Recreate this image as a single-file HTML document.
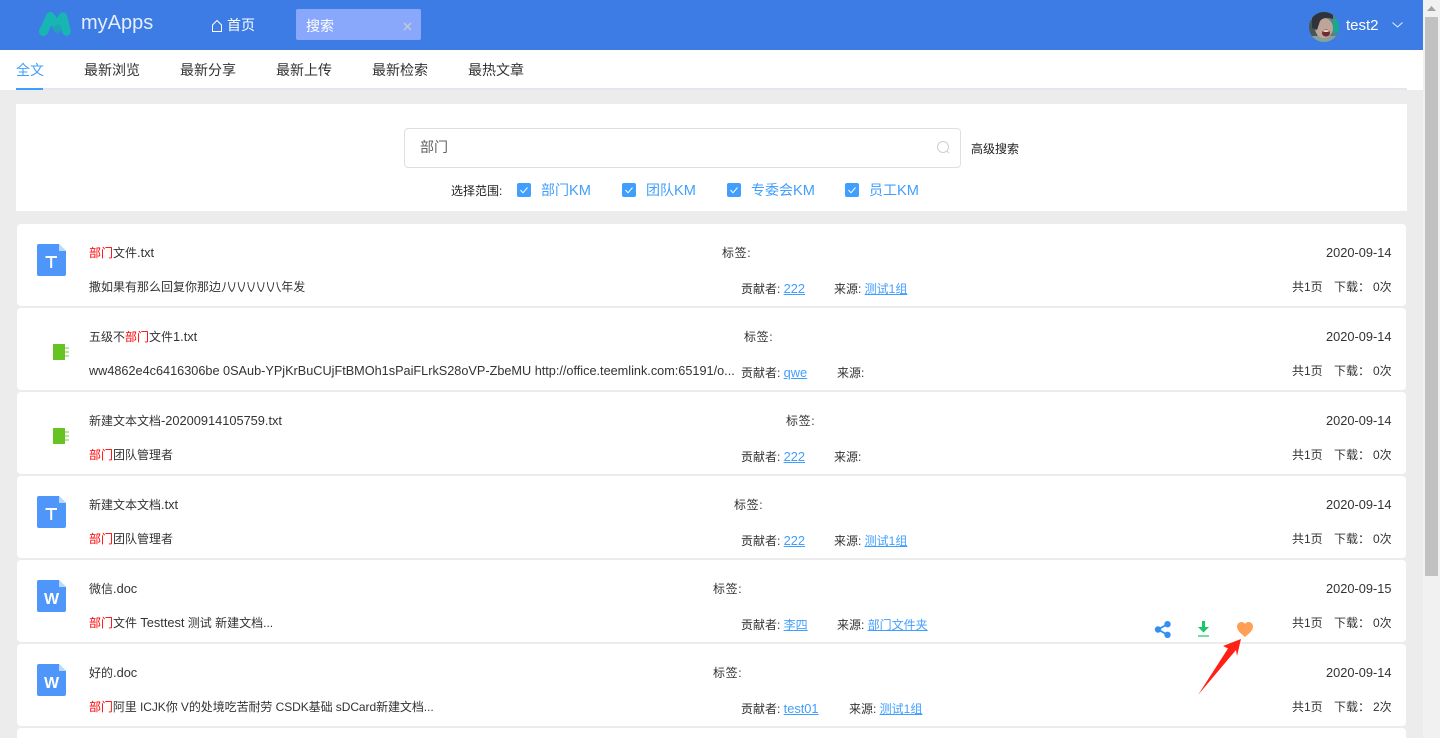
<!DOCTYPE html>
<html lang="zh">
<head>
<meta charset="utf-8">
<title>myApps</title>
<style>
html,body{margin:0;padding:0;width:1440px;height:738px;overflow:hidden;background:#ececec}
body{position:relative;font-family:"Liberation Sans","Noto Sans CJK SC",sans-serif;font-size:12px;color:#333}
.a{position:absolute;white-space:nowrap;line-height:16px}
.hd{position:absolute;left:0;top:0;width:1423px;height:50px;background:#3d7ce4}
.tabs{position:absolute;left:0;top:50px;width:1423px;height:40px;background:#fff}
.tabline{position:absolute;left:16px;top:88px;width:1391px;height:2px;background:#e4e7ed}
.tabact{position:absolute;left:16px;top:88px;width:27px;height:2px;background:#409eff}
.t{position:absolute;top:62px;font-size:14px;line-height:16px;color:#303133;white-space:nowrap}
.panel{position:absolute;left:16px;top:104px;width:1391px;height:107px;background:#fff}
.inp{position:absolute;left:404px;top:128px;width:555px;height:38px;border:1px solid #dcdfe6;border-radius:4px;background:#fff}
.cb{position:absolute;top:183px;width:14px;height:14px;border-radius:2px;background:#409eff}
.cbl{position:absolute;top:182px;font-size:14px;line-height:16px;color:#409eff;white-space:nowrap}
.cbl span{font-size:14.6px}
.card{position:absolute;left:17px;width:1389px;height:82px;background:#fff;border-radius:4px}
.red{color:#f00}
a{color:#409eff;text-decoration:underline}
.l{font-size:12.8px}
.sb{position:absolute;left:1423px;top:0;width:17px;height:738px;background:#f1f1f1}
.th{position:absolute;left:2px;top:17px;width:13px;height:559px;background:#c1c1c1}
.tag{letter-spacing:.6px}
</style>
</head>
<body>
<div class="hd"></div>
<svg class="a" style="left:38px;top:11px" width="34" height="26" viewBox="0 0 34 26"><path d="M13 6 L19.5 18 L24.5 6" fill="none" stroke="#1fa3b6" stroke-width="8" stroke-linecap="round" stroke-linejoin="round"/><path d="M5.5 20.5 L12.5 5.5 L16 11" fill="none" stroke="#17b6b2" stroke-width="9" stroke-linecap="round" stroke-linejoin="round"/><path d="M22 10 L25 5.5 L28.5 20.5" fill="none" stroke="#17b6b2" stroke-width="8.5" stroke-linecap="round" stroke-linejoin="round"/></svg>
<div class="a" style="left:81px;top:9px;font-size:20px;line-height:28px;color:#e6eefb">myApps</div>
<svg class="a" style="left:210px;top:18px" width="14" height="14" viewBox="0 0 14 14"><path d="M2.5 13.5 V7 L7 2.5 L11.5 7 V13.5 Z" fill="none" stroke="#fff" stroke-width="1"/></svg>
<div class="a" style="left:227px;top:17px;font-size:14px;color:#fff;line-height:16px">首页</div>
<div class="a" style="left:296px;top:9px;width:125px;height:31px;background:#8aa8fb;border-radius:2px"></div>
<div class="a" style="left:306px;top:18px;font-size:14px;color:#fff">搜索</div>
<svg class="a" style="left:403px;top:22px" width="9" height="9" viewBox="0 0 9 9"><path d="M1 1 L8 8 M8 1 L1 8" stroke="#c3c9d6" stroke-width="1.5"/></svg>
<svg class="a" style="left:1309px;top:12px" width="30" height="30" viewBox="0 0 30 30"><defs><clipPath id="c"><circle cx="15" cy="15" r="15"/></clipPath></defs><g clip-path="url(#c)"><rect width="30" height="30" fill="#5f7f82"/><rect x="24" y="7" width="6" height="14" fill="#18a88f"/><rect x="0" y="24" width="30" height="6" fill="#8aa09c"/><path d="M0 8 H8 V24 H0Z" fill="#475659"/><ellipse cx="15" cy="16" rx="9" ry="10" fill="#c0a497"/><path d="M3 0 H24 V7 Q15 4 11 9 L8 18 L3 16Z" fill="#2e3439"/><ellipse cx="17" cy="21" rx="4" ry="3.5" fill="#6f2a30"/><ellipse cx="17" cy="19" rx="3" ry="1" fill="#e6d8d4"/></g></svg>
<div class="a" style="left:1346px;top:18px;font-size:15px;color:#fff">test2</div>
<svg class="a" style="left:1391px;top:21px" width="13" height="8" viewBox="0 0 13 8"><path d="M1.5 1.5 L6.5 6 L11.5 1.5" fill="none" stroke="#e8eefc" stroke-width="1"/></svg>

<div class="tabs"></div>
<div class="tabline"></div>
<div class="tabact"></div>
<div class="t" style="left:16px;color:#409eff">全文</div>
<div class="t" style="left:84px">最新浏览</div>
<div class="t" style="left:180px">最新分享</div>
<div class="t" style="left:276px">最新上传</div>
<div class="t" style="left:372px">最新检索</div>
<div class="t" style="left:468px">最热文章</div>

<div class="panel"></div>
<div class="inp"></div>
<div class="a" style="left:420px;top:139px;font-size:14px;color:#606266">部门</div>
<svg class="a" style="left:936px;top:140px" width="15" height="15" viewBox="0 0 15 15"><circle cx="7" cy="7" r="5.5" fill="none" stroke="#c9ced8" stroke-width="1"/><path d="M11 11 L13 13" stroke="#c9ced8" stroke-width="1"/></svg>
<div class="a" style="left:971px;top:141px;color:#222">高级搜索</div>
<div class="a" style="left:451px;top:183px;color:#222">选择范围:</div>

<div class="cb" style="left:517px"><svg width="14" height="14"><path d="M3.5 7 L6 9.8 L10.5 4.5" fill="none" stroke="#fff" stroke-width="1"/></svg></div>
<div class="cbl" style="left:541px">部门<span>KM</span></div>
<div class="cb" style="left:622px"><svg width="14" height="14"><path d="M3.5 7 L6 9.8 L10.5 4.5" fill="none" stroke="#fff" stroke-width="1"/></svg></div>
<div class="cbl" style="left:646px">团队<span>KM</span></div>
<div class="cb" style="left:727px"><svg width="14" height="14"><path d="M3.5 7 L6 9.8 L10.5 4.5" fill="none" stroke="#fff" stroke-width="1"/></svg></div>
<div class="cbl" style="left:751px">专委会<span>KM</span></div>
<div class="cb" style="left:845px"><svg width="14" height="14"><path d="M3.5 7 L6 9.8 L10.5 4.5" fill="none" stroke="#fff" stroke-width="1"/></svg></div>
<div class="cbl" style="left:869px">员工<span>KM</span></div>

<!-- card 1 -->
<div class="card" style="top:224px"></div>
<svg class="a" style="left:37px;top:244px" width="29" height="32" viewBox="0 0 29 32"><path d="M2 0 H22 L29 7 V30 Q29 32 27 32 H2 Q0 32 0 30 V2 Q0 0 2 0Z" fill="#4f96fb"/><path d="M22 0 L29 7 H22Z" fill="#bcd8fd"/><path d="M8.5 13 H20 M14.2 13 V24" stroke="#fff" stroke-width="2" fill="none"/></svg>
<div class="a" style="left:89px;top:245px"><span class="red">部门</span>文件<span class="l">.txt</span></div>
<div class="a" style="left:89px;top:279px">撒如果有那么回复你那边<span style="letter-spacing:-2.3px">八八八八八八</span><span style="margin-left:2px">年发</span></div>
<div class="a tag" style="left:722px;top:245px">标签:</div>
<div class="a" style="left:741px;top:281px">贡献者: <a class="l">222</a></div>
<div class="a" style="left:834px;top:281px">来源: <a>测试1组</a></div>
<div class="a l" style="left:1326px;top:245px">2020-09-14</div>
<div class="a" style="left:1292px;top:279px">共1页</div>
<div class="a" style="left:1334px;top:279px">下载：</div>
<div class="a" style="left:1373px;top:279px">0次</div>

<!-- card 2 -->
<div class="card" style="top:308px"></div>
<svg class="a" style="left:53px;top:344px" width="16" height="16" viewBox="0 0 16 16"><rect width="12" height="16" fill="#67c323"/><path d="M12 4 H16 M12 8 H16 M12 12 H16" stroke="#8fd65c" stroke-width="1.3"/></svg>
<div class="a" style="left:89px;top:329px">五级不<span class="red">部门</span>文件<span class="l">1.txt</span></div>
<div class="a" style="left:89px;top:363px;font-size:12.7px">ww4862e4c6416306be 0SAub-YPjKrBuCUjFtBMOh1sPaiFLrkS28oVP-ZbeMU http://office.teemlink.com:65191/o...</div>
<div class="a tag" style="left:744px;top:329px">标签:</div>
<div class="a" style="left:741px;top:365px">贡献者: <a class="l">qwe</a></div>
<div class="a" style="left:837px;top:365px">来源:</div>
<div class="a l" style="left:1326px;top:329px">2020-09-14</div>
<div class="a" style="left:1292px;top:363px">共1页</div>
<div class="a" style="left:1334px;top:363px">下载：</div>
<div class="a" style="left:1373px;top:363px">0次</div>

<!-- card 3 -->
<div class="card" style="top:392px"></div>
<svg class="a" style="left:53px;top:428px" width="16" height="16" viewBox="0 0 16 16"><rect width="12" height="16" fill="#67c323"/><path d="M12 4 H16 M12 8 H16 M12 12 H16" stroke="#8fd65c" stroke-width="1.3"/></svg>
<div class="a" style="left:89px;top:413px">新建文本文档<span class="l">-20200914105759.txt</span></div>
<div class="a" style="left:89px;top:447px"><span class="red">部门</span>团队管理者</div>
<div class="a tag" style="left:786px;top:413px">标签:</div>
<div class="a" style="left:741px;top:449px">贡献者: <a class="l">222</a></div>
<div class="a" style="left:834px;top:449px">来源:</div>
<div class="a l" style="left:1326px;top:413px">2020-09-14</div>
<div class="a" style="left:1292px;top:447px">共1页</div>
<div class="a" style="left:1334px;top:447px">下载：</div>
<div class="a" style="left:1373px;top:447px">0次</div>

<!-- card 4 -->
<div class="card" style="top:476px"></div>
<svg class="a" style="left:37px;top:496px" width="29" height="32" viewBox="0 0 29 32"><path d="M2 0 H22 L29 7 V30 Q29 32 27 32 H2 Q0 32 0 30 V2 Q0 0 2 0Z" fill="#4f96fb"/><path d="M22 0 L29 7 H22Z" fill="#bcd8fd"/><path d="M8.5 13 H20 M14.2 13 V24" stroke="#fff" stroke-width="2" fill="none"/></svg>
<div class="a" style="left:89px;top:497px">新建文本文档<span class="l">.txt</span></div>
<div class="a" style="left:89px;top:531px"><span class="red">部门</span>团队管理者</div>
<div class="a tag" style="left:734px;top:497px">标签:</div>
<div class="a" style="left:741px;top:533px">贡献者: <a class="l">222</a></div>
<div class="a" style="left:834px;top:533px">来源: <a>测试1组</a></div>
<div class="a l" style="left:1326px;top:497px">2020-09-14</div>
<div class="a" style="left:1292px;top:531px">共1页</div>
<div class="a" style="left:1334px;top:531px">下载：</div>
<div class="a" style="left:1373px;top:531px">0次</div>

<!-- card 5 -->
<div class="card" style="top:560px"></div>
<svg class="a" style="left:37px;top:580px" width="29" height="32" viewBox="0 0 29 32"><path d="M2 0 H22 L29 7 V30 Q29 32 27 32 H2 Q0 32 0 30 V2 Q0 0 2 0Z" fill="#4f96fb"/><path d="M22 0 L29 7 H22Z" fill="#bcd8fd"/><text x="14.5" y="24" font-size="16" font-weight="bold" fill="#fff" text-anchor="middle" font-family="Liberation Sans">W</text></svg>
<div class="a" style="left:89px;top:581px">微信<span class="l">.doc</span></div>
<div class="a" style="left:89px;top:615px"><span class="red">部门</span>文件 <span class="l">Testtest</span> 测试 新建文档...</div>
<div class="a tag" style="left:713px;top:581px">标签:</div>
<div class="a" style="left:741px;top:617px">贡献者: <a>李四</a></div>
<div class="a" style="left:837px;top:617px">来源: <a>部门文件夹</a></div>
<div class="a l" style="left:1326px;top:581px">2020-09-15</div>
<div class="a" style="left:1292px;top:615px">共1页</div>
<div class="a" style="left:1334px;top:615px">下载：</div>
<div class="a" style="left:1373px;top:615px">0次</div>
<svg class="a" style="left:1154px;top:621px" width="17" height="17" viewBox="0 0 17 17"><path d="M13.5 3.2 L4 8.5 L13.5 13.8" fill="none" stroke="#3390f0" stroke-width="1.8"/><circle cx="13.5" cy="3.2" r="3.2" fill="#3390f0"/><circle cx="4" cy="8.5" r="3.2" fill="#3390f0"/><circle cx="13.5" cy="13.8" r="3.2" fill="#3390f0"/></svg>
<svg class="a" style="left:1197px;top:621px" width="13" height="16" viewBox="0 0 13 16"><path d="M5 0 H8 V6 H12 L6.5 11.5 L1 6 H5Z" fill="#19c765"/><path d="M1 15 H12" stroke="#19c765" stroke-width="1.2"/></svg>
<svg class="a" style="left:1237px;top:622px" width="16" height="15" viewBox="0 0 16 15"><path d="M8 15 C5 12.2 0 9 0 4.6 C0 2 2 0 4.4 0 C6 0 7.3 .8 8 2 C8.7 .8 10 0 11.6 0 C14 0 16 2 16 4.6 C16 9 11 12.2 8 15Z" fill="#ff9f55"/></svg>

<!-- card 6 -->
<div class="card" style="top:644px"></div>
<svg class="a" style="left:37px;top:664px" width="29" height="32" viewBox="0 0 29 32"><path d="M2 0 H22 L29 7 V30 Q29 32 27 32 H2 Q0 32 0 30 V2 Q0 0 2 0Z" fill="#4f96fb"/><path d="M22 0 L29 7 H22Z" fill="#bcd8fd"/><text x="14.5" y="24" font-size="16" font-weight="bold" fill="#fff" text-anchor="middle" font-family="Liberation Sans">W</text></svg>
<div class="a" style="left:89px;top:665px">好的<span class="l">.doc</span></div>
<div class="a" style="left:89px;top:699px;letter-spacing:-.07px"><span class="red">部门</span>阿里 ICJK你 V的处境吃苦耐劳 CSDK基础 sDCard新建文档...</div>
<div class="a tag" style="left:713px;top:665px">标签:</div>
<div class="a" style="left:741px;top:701px">贡献者: <a class="l">test01</a></div>
<div class="a" style="left:849px;top:701px">来源: <a>测试1组</a></div>
<div class="a l" style="left:1326px;top:665px">2020-09-14</div>
<div class="a" style="left:1292px;top:699px">共1页</div>
<div class="a" style="left:1334px;top:699px">下载：</div>
<div class="a" style="left:1373px;top:699px">2次</div>

<div class="card" style="top:728px"></div>

<!-- red arrow -->
<svg class="a" style="left:1190px;top:630px" width="60" height="70" viewBox="0 0 60 70"><path d="M8 65 L38 18.5 L33 16 L51 9 L47 26 L46 20 Z" fill="#ff2015"/></svg>

<div class="sb"><div class="th"></div><svg style="position:absolute;left:4px;top:6px" width="9" height="5"><path d="M4.5 0 L9 5 H0Z" fill="#a3a3a3"/></svg></div>
</body>
</html>
